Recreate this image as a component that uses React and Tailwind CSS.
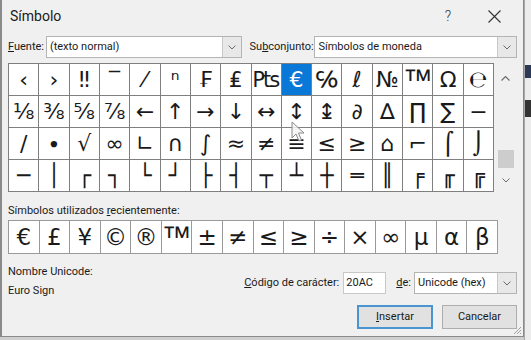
import React from 'react';

const rows = [
  ['‹', '›', '‼', '‾', '⁄', 'ⁿ', '₣', '₤', '₧', '€', '℅', 'ℓ', '№', '™', 'Ω', '℮'],
  ['⅛', '⅜', '⅝', '⅞', '←', '↑', '→', '↓', '↔', '↕', '↨', '∂', '∆', '∏', '∑', '−'],
  ['∕', '∙', '√', '∞', '∟', '∩', '∫', '≈', '≠', '≡', '≤', '≥', '⌂', '⌐', '⌠', '⌡'],
  ['─', '│', '┌', '┐', '└', '┘', '├', '┤', '┬', '┴', '┼', '═', '║', '╒', '╓', '╔'],
];

const recent = ['€', '£', '¥', '©', '®', '™', '±', '≠', '≤', '≥', '÷', '×', '∞', 'µ', 'α', 'β'];

function Chevron() {
  return (
    <svg width="8" height="5" viewBox="0 0 8 5" fill="none">
      <path d="M0.5 0.5 L4 4 L7.5 0.5" stroke="#6b6b6b" strokeWidth="1" />
    </svg>
  );
}

function Select({ width, text }) {
  return (
    <div className={`${width} h-[22px] bg-white border border-[#b4b4b4] flex items-stretch`}>
      <div className="flex-1 pl-[3px] flex items-center text-[#1a1a1a] whitespace-nowrap overflow-hidden">{text}</div>
      <div className="w-[19px] bg-[#e8e8e8] border-l border-[#c8c8c8] flex items-center justify-center">
        <Chevron />
      </div>
    </div>
  );
}

function Glyph({ c }) {
  if (c === '™') {
    return <span className="font-['Liberation_Sans',sans-serif] text-[30px] leading-none">™</span>;
  }
  return c;
}

export default function App() {
  const sym = "font-['DejaVu_Sans',sans-serif]";
  return (
    <div className="w-[531px] h-[340px] bg-[#cfcfcf] flex items-start overflow-hidden relative font-['Roboto',sans-serif] text-[11px] text-[#1a1a1a]">
      <div className="w-[524px] h-[337px] bg-[#f0f0f0] border-l-2 border-r border-b border-[#8a8a8a] flex flex-col pl-[6px] pr-[6px] relative shrink-0">
        {/* title bar */}
        <div className="h-[32px] flex items-center justify-between -ml-[4px] shrink-0">
          <span className="text-[14px] pl-[6px] text-[#1a1a1a]">Símbolo</span>
          <div className="flex items-center gap-[37px] pr-[16px]">
            <span className="text-[14px] text-[#333] font-light">?</span>
            <svg width="13" height="13" viewBox="0 0 13 13">
              <path d="M0.5 0.5 L12.5 12.5 M12.5 0.5 L0.5 12.5" stroke="#333" strokeWidth="1.1" />
            </svg>
          </div>
        </div>

        {/* font / subset row */}
        <div className="mt-[4px] h-[22px] flex items-center shrink-0">
          <span className="w-[38px] whitespace-nowrap"><span className="underline">F</span>uente:</span>
          <Select width="w-[196px]" text="(texto normal)" />
          <span className="ml-[8px] w-[65px] whitespace-nowrap">Su<span className="underline">b</span>conjunto:</span>
          <Select width="w-[203px]" text="Símbolos de moneda" />
        </div>

        {/* symbol grid */}
        <div className="mt-[5px] flex shrink-0">
          <div className="w-[486px] h-[129px] bg-[#7f7f7f] border border-[#7f7f7f] grid grid-cols-16 grid-rows-4 gap-px">
            {rows.map((r, ri) =>
              r.map((c, ci) => {
                const sel = ri === 0 && ci === 9;
                return (
                  <div
                    key={`${ri}-${ci}`}
                    className={`${sel ? 'bg-[#0a78d7] text-white' : 'bg-white text-[#1a1a1a]'} ${sym} text-[22px] leading-none flex items-center justify-center overflow-hidden whitespace-nowrap`}
                  >
                    <Glyph c={c} />
                  </div>
                );
              })
            )}
          </div>
          <div className="ml-[1px] w-[21px] h-[129px] flex flex-col items-center">
            <div className="h-[18px] flex items-end justify-center">
              <svg width="9" height="5" viewBox="0 0 9 5" fill="none">
                <path d="M0.5 4.5 L4.5 0.5 L8.5 4.5" stroke="#6f6f6f" strokeWidth="1.2" />
              </svg>
            </div>
            <div className="flex-1 w-full flex flex-col justify-end items-center">
              <div className="w-[16px] h-[18px] bg-[#cdcdcd]" />
            </div>
            <div className="h-[24px] flex items-center justify-center">
              <Chevron />
            </div>
          </div>
        </div>

        {/* recent label */}
        <div className="mt-[11px] h-[16px] leading-[16px] whitespace-nowrap shrink-0">
          Símbolos utilizados <span className="underline">r</span>ecientemente:
        </div>

        {/* recent row */}
        <div className="mt-[1px] w-[490px] h-[34px] bg-[#9a9a9a] border border-[#9a9a9a] grid grid-cols-16 gap-px shrink-0">
          {recent.map((c, i) => (
            <div key={i} className={`bg-white ${sym} text-[23px] leading-none flex items-center justify-center overflow-hidden`}>
              <Glyph c={c} />
            </div>
          ))}
        </div>

        {/* bottom */}
        <div className="mt-[10px] flex shrink-0">
          <div className="flex flex-col w-[240px]">
            <div className="h-[16px] leading-[16px]">Nombre Unicode:</div>
            <div className="mt-[3px] h-[16px] leading-[16px]">Euro Sign</div>
          </div>
          <div className="flex-1 flex flex-col items-end">
            <div className="mt-[8px] h-[22px] flex items-center">
              <span className="whitespace-nowrap"><span className="underline">C</span>ódigo de carácter:</span>
              <div className="ml-[4px] w-[43px] h-[22px] bg-white border border-[#c8c8c8] pl-[2px] flex items-center">20AC</div>
              <span className="ml-[10px]"><span className="underline">d</span>e:</span>
              <div className="ml-[3px]">
                <Select width="w-[103px]" text="Unicode (hex)" />
              </div>
            </div>
            <div className="mt-[11px] flex gap-[9px]">
              <div className="w-[76px] h-[24px] bg-[#e1e1e1] border-2 border-[#4a94d2] flex items-center justify-center">
                <span><span className="underline">I</span>nsertar</span>
              </div>
              <div className="w-[75px] h-[24px] bg-[#e1e1e1] border border-[#adadad] flex items-center justify-center">
                Cancelar
              </div>
            </div>
          </div>
        </div>

        {/* resize grip */}
        <svg className="absolute right-[1px] bottom-[1px]" width="10" height="10" viewBox="0 0 10 10">
          <path d="M9 2 L2 9 M9 5 L5 9 M9 8 L8 9" stroke="#a0a0a0" strokeWidth="1" />
        </svg>
      </div>

      {/* right background strip */}
      <div className="flex-1 h-full bg-[#ececec] flex">
        <div className="w-[1px] h-full bg-[#a8a8a8]" />
        <div className="flex-1 h-full flex flex-col">
          <div className="h-[65px]" />
          <div className="h-[13px] bg-[#2c3a58]" />
          <div className="h-[22px]" />
          <div className="h-[17px] bg-[#333333]" />
        </div>
      </div>

      {/* mouse cursor */}
      <svg className="absolute left-[291px] top-[121px]" width="14" height="22" viewBox="0 0 14 22">
        <path d="M1 1 L1 17 L5 13 L8 20 L10.5 19 L7.5 12 L13 12 Z" fill="#f4f4f4" fillOpacity="0.85" stroke="#8a8a8a" strokeWidth="1" />
      </svg>
    </div>
  );
}
